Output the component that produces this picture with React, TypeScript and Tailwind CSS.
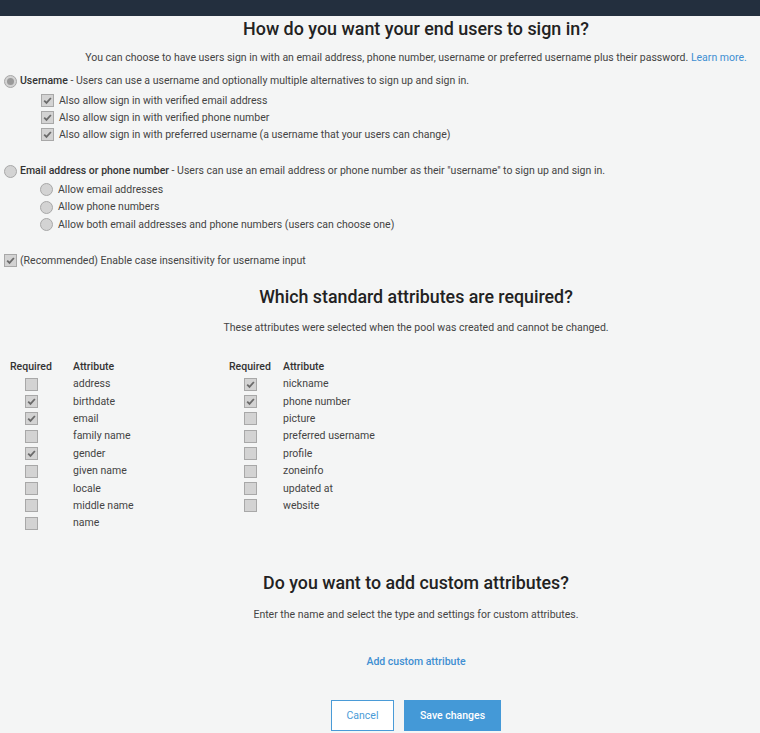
import React from "react";

function Check({ checked }: { checked?: boolean }) {
  return (
    <span className="inline-flex w-[13px] h-[13px] shrink-0 items-center justify-center bg-[#d3d3d3] border border-[#a8a8a8]">
      {checked && (
        <svg width="9" height="9" viewBox="0 0 9 9">
          <path d="M1.2 4.6 L3.5 6.9 L7.9 2" stroke="#6b6b6b" strokeWidth="1.8" fill="none" />
        </svg>
      )}
    </span>
  );
}

function Radio({ checked }: { checked?: boolean }) {
  return (
    <span className="inline-flex w-[13px] h-[13px] shrink-0 items-center justify-center rounded-full bg-[#d3d3d3] border border-[#a8a8a8]">
      {checked && <span className="w-[7px] h-[7px] rounded-full bg-[#9a9a9a]" />}
    </span>
  );
}

const left: [string, boolean][] = [
  ["address", false],
  ["birthdate", true],
  ["email", true],
  ["family name", false],
  ["gender", true],
  ["given name", false],
  ["locale", false],
  ["middle name", false],
  ["name", false],
];
const right: [string, boolean][] = [
  ["nickname", true],
  ["phone number", true],
  ["picture", false],
  ["preferred username", false],
  ["profile", false],
  ["zoneinfo", false],
  ["updated at", false],
  ["website", false],
];

function AttrTable({ rows, reqW, className }: { rows: [string, boolean][]; reqW: string; className: string }) {
  return (
    <div className={className}>
      <div className="flex h-4 items-center font-medium text-[#333]">
        <div className={reqW}>Required</div>
        <div>Attribute</div>
      </div>
      <div className="mt-px">
        {rows.map(([n, c]) => (
          <div key={n} className="flex h-[17.4px] items-center">
            <div className={reqW + " flex"}>
              <span className="w-[42px] flex justify-center">
                <Check checked={c} />
              </span>
            </div>
            <div>{n}</div>
          </div>
        ))}
      </div>
    </div>
  );
}

export default function App() {
  return (
    <div className="w-[760px] h-[733px] overflow-hidden bg-[#f4f5f5] font-['Roboto','Liberation_Sans',sans-serif] text-[10.5px] text-[#444]">
      <div className="h-4 bg-[#232f3e]" />
      <div className="w-[832px]">
        <h1 className="mt-px h-6 leading-6 text-center text-[17.9px] font-medium text-[#222]">
          How do you want your end users to sign in?
        </h1>
        <p className="mt-[9px] h-4 leading-4 text-center">
          You can choose to have users sign in with an email address, phone number, username or preferred username plus their password.{" "}
          <span className="text-[#3f8fd2]">Learn more.</span>
        </p>
        <div className="pl-1">
          <div className="mt-[7px] flex h-4 items-center gap-[3px]">
            <Radio checked />
            <span>
              <span className="font-medium text-[#333]">Username</span> - Users can use a username and optionally multiple alternatives to sign up and sign in.
            </span>
          </div>
          <div className="mt-[3px] pl-[37px]">
            {[
              "Also allow sign in with verified email address",
              "Also allow sign in with verified phone number",
              "Also allow sign in with preferred username (a username that your users can change)",
            ].map((t) => (
              <div key={t} className="flex h-[17px] items-center gap-[5px]">
                <Check checked />
                <span>{t}</span>
              </div>
            ))}
          </div>
          <div className="mt-[20px] flex h-4 items-center gap-[3px]">
            <Radio />
            <span>
              <span className="font-medium text-[#333]">Email address or phone number</span> - Users can use an email address or phone number as their "username" to sign up and sign in.
            </span>
          </div>
          <div className="mt-[2px] pl-[36px]">
            {[
              "Allow email addresses",
              "Allow phone numbers",
              "Allow both email addresses and phone numbers (users can choose one)",
            ].map((t) => (
              <div key={t} className="flex h-[17.5px] items-center gap-[5px]">
                <Radio />
                <span>{t}</span>
              </div>
            ))}
          </div>
          <div className="mt-[19px] flex h-4 items-center gap-[3px]">
            <Check checked />
            <span>(Recommended) Enable case insensitivity for username input</span>
          </div>
        </div>
        <h2 className="mt-[16px] h-6 leading-6 text-center text-[17.8px] font-medium text-[#222]">
          Which standard attributes are required?
        </h2>
        <p className="mt-[11px] h-4 leading-4 text-center">
          These attributes were selected when the pool was created and cannot be changed.
        </p>
        <div className="mt-[23px] flex">
          <AttrTable rows={left} reqW="w-[63px]" className="ml-[10px] w-[219px]" />
          <AttrTable rows={right} reqW="w-[54px]" className="" />
        </div>
        <h2 className="mt-[39px] h-6 leading-6 text-center text-[17.8px] font-medium text-[#222]">
          Do you want to add custom attributes?
        </h2>
        <p className="mt-[12px] h-4 leading-4 text-center">
          Enter the name and select the type and settings for custom attributes.
        </p>
        <div className="mt-[31px] h-4 leading-4 text-center font-medium text-[#3f8fd2]">Add custom attribute</div>
        <div className="mt-[30px] flex justify-center gap-[10px]">
          <button className="h-[31px] w-[63px] border border-[#4a9bd7] bg-white text-[#4a9bd7]">Cancel</button>
          <button className="h-[31px] w-[97px] bg-[#4499d7] font-medium text-white">Save changes</button>
        </div>
      </div>
    </div>
  );
}
